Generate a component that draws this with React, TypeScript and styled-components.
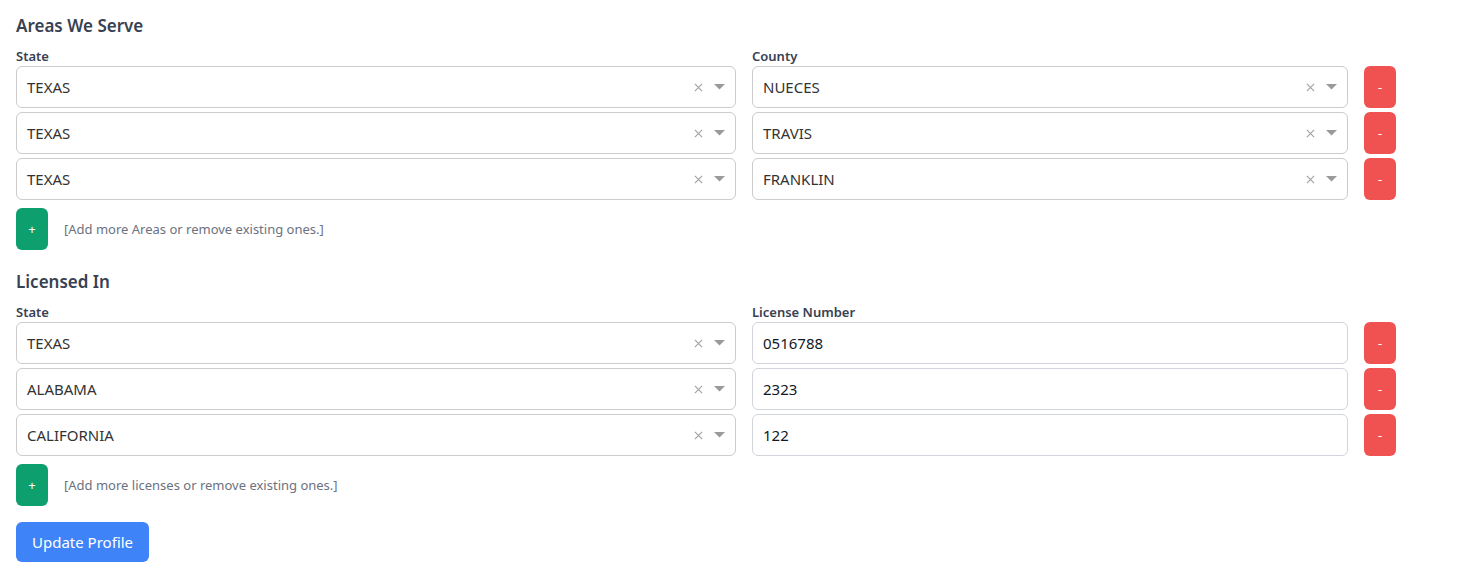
import React from 'react';
import styled, {createGlobalStyle} from 'styled-components';

const GlobalStyle = createGlobalStyle`
  body {
    margin: 0;
    background: #ffffff;
    font-family: "Noto Sans", "Open Sans", sans-serif;
    color: #374151;
  }
`

type AreaType = { state: string, county: string }
type LicenseType = { state: string, number: string }

const areas: AreaType[] = [
    {state: 'TEXAS', county: 'NUECES'},
    {state: 'TEXAS', county: 'TRAVIS'},
    {state: 'TEXAS', county: 'FRANKLIN'},
]

const licenses: LicenseType[] = [
    {state: 'TEXAS', number: '0516788'},
    {state: 'ALABAMA', number: '2323'},
    {state: 'CALIFORNIA', number: '122'},
]

const SelectBox: React.FC<{ value: string }> = ({value}) => {
    return (
        <Select>
            <SelectValue>{value}</SelectValue>
            <Indicators>
                <svg width="9" height="9" viewBox="0 0 10 10">
                    <path d="M1 1 L9 9 M9 1 L1 9" stroke="#a3a3a3" strokeWidth="1.3"/>
                </svg>
                <svg width="11" height="6" viewBox="0 0 11 6">
                    <path d="M0 0 L11 0 L5.5 5.5 Z" fill="#9a9a9a"/>
                </svg>
            </Indicators>
        </Select>
    )
}

const App = () => {
    return (
        <>
            <GlobalStyle/>
            <Page>
                <Section>
                    <Title>Areas We Serve</Title>
                    <Grid>
                        <Label>State</Label>
                        <Label>County</Label>
                        <span/>
                        {areas.map((a, i) => (
                            <React.Fragment key={i}>
                                <SelectBox value={a.state}/>
                                <SelectBox value={a.county}/>
                                <RemoveButton>-</RemoveButton>
                            </React.Fragment>
                        ))}
                    </Grid>
                    <AddRow>
                        <AddButton>+</AddButton>
                        <Hint>[Add more Areas or remove existing ones.]</Hint>
                    </AddRow>
                </Section>

                <Section>
                    <Title>Licensed In</Title>
                    <Grid>
                        <Label>State</Label>
                        <Label>License Number</Label>
                        <span/>
                        {licenses.map((l, i) => (
                            <React.Fragment key={i}>
                                <SelectBox value={l.state}/>
                                <TextInput defaultValue={l.number}/>
                                <RemoveButton>-</RemoveButton>
                            </React.Fragment>
                        ))}
                    </Grid>
                    <AddRow>
                        <AddButton>+</AddButton>
                        <Hint>[Add more licenses or remove existing ones.]</Hint>
                    </AddRow>
                </Section>

                <SubmitButton>Update Profile</SubmitButton>
            </Page>
        </>
    );
};

export default App;

const Page = styled.div`
  padding: 14px 16px 11px 16px;
  display: flex;
  flex-direction: column;
  align-items: flex-start;
  gap: 16px;
`

const Section = styled.div`
  display: flex;
  flex-direction: column;
  & + & {
    margin-top: 4px;
  }
`

const Title = styled.h2`
  margin: 0 0 10px 0;
  font-size: 17px;
  line-height: 24px;
  font-weight: 600;
  color: #374151;
`

const Grid = styled.div`
  display: grid;
  grid-template-columns: 720px 596px 32px;
  column-gap: 16px;
  row-gap: 4px;
`

const Label = styled.div`
  font-size: 13px;
  line-height: 16px;
  font-weight: 600;
  color: #374151;
  margin-bottom: -2px;
`

const Select = styled.div`
  box-sizing: border-box;
  height: 42px;
  border: 1px solid #cccccc;
  border-radius: 6px;
  display: flex;
  align-items: center;
  padding: 0 10px;
  background: #fff;
`

const SelectValue = styled.div`
  flex: 1;
  font-size: 15px;
  color: #333333;
`

const Indicators = styled.div`
  display: flex;
  align-items: center;
  gap: 11px;
`

const TextInput = styled.input`
  box-sizing: border-box;
  height: 42px;
  border: 1px solid #d1d5db;
  border-radius: 6px;
  padding: 0 10px;
  font-family: inherit;
  font-size: 15px;
  color: #111827;
  outline: none;
`

const RemoveButton = styled.button`
  height: 42px;
  width: 32px;
  border: none;
  border-radius: 6px;
  background: #f05252;
  color: #fff;
  font-family: inherit;
  font-size: 13px;
  padding: 0;
`

const AddRow = styled.div`
  display: flex;
  align-items: center;
  gap: 16px;
  margin-top: 8px;
`

const AddButton = styled.button`
  height: 42px;
  width: 32px;
  border: none;
  border-radius: 6px;
  background: #0e9f6e;
  color: #fff;
  font-family: inherit;
  font-size: 13px;
  padding: 0;
`

const Hint = styled.span`
  font-size: 13px;
  color: #6b7280;
`

const SubmitButton = styled.button`
  height: 40px;
  padding: 0 16px;
  border: none;
  border-radius: 6px;
  background: #3f83f8;
  color: #fff;
  font-family: inherit;
  font-size: 15px;
`
